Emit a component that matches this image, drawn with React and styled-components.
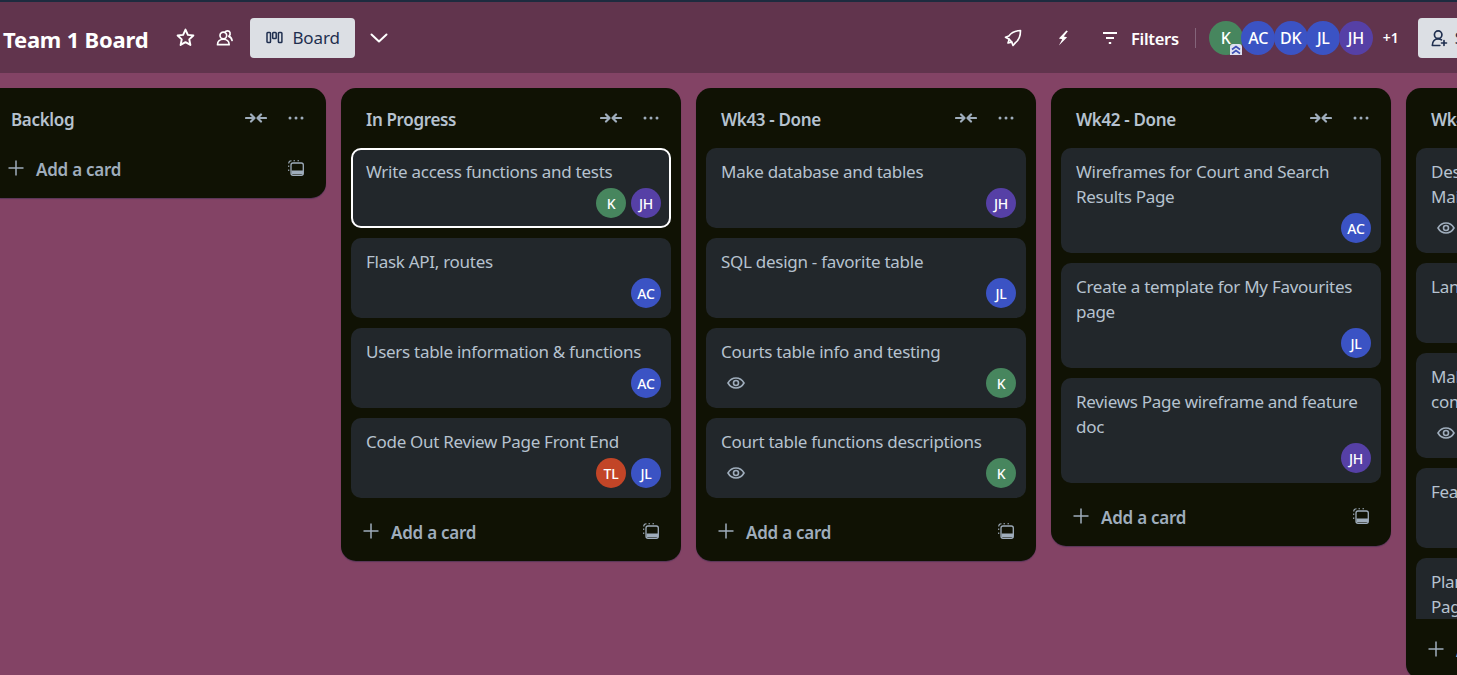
import styled, { createGlobalStyle } from "styled-components";

const GlobalStyle = createGlobalStyle`
  html, body {
    margin: 0;
    height: 100%;
    overflow: hidden;
    background-color: #834365;
    font-family: "Noto Sans", "Open Sans", sans-serif;
  }
`;

const Page = styled.div`
  width: 1457px;
  height: 675px;
  overflow: hidden;
  border-top: 2px solid #1d2b3f;
  box-sizing: border-box;
`;

// 상단 헤더, 공유 버튼이 화면 밖으로 잘림
const Header = styled.header`
  width: 1525px;
  height: 71px;
  box-sizing: border-box;
  padding: 0 10px 0 3px;
  background-color: #61344d;
  display: flex;
  align-items: center;
  justify-content: space-between;
  color: #fff;
`;

const HeaderGroup = styled.div`
  display: flex;
  align-items: center;
`;

const Title = styled.h1`
  margin: 0 17px 0 0;
  padding-top: 2px;
  font-size: 22px;
  font-weight: 700;
  letter-spacing: -0.2px;
  color: #fff;
  white-space: nowrap;
`;

const HeaderIcon = styled.span`
  display: flex;
  align-items: center;
  justify-content: center;
  width: ${(p) => p.$w || 40}px;
  color: #fff;
`;

const BoardButton = styled.div`
  display: flex;
  align-items: center;
  gap: 9px;
  height: 40px;
  padding: 0 15px 0 16px;
  margin-left: 5px;
  box-sizing: border-box;
  background-color: #dcdfe4;
  border-radius: 4px;
  color: #1f2f4f;
  font-size: 17px;
  letter-spacing: -0.1px;
`;

const FilterLabel = styled.span`
  padding-top: 2px;
  font-size: 16.5px;
  font-weight: 600;
  letter-spacing: -0.3px;
  margin-left: 4px;
`;

const Divider = styled.span`
  width: 1px;
  height: 20px;
  margin: 0 13px 0 16px;
  background-color: #84647a;
`;

const Members = styled.div`
  display: flex;
  align-items: center;
`;

const Avatar = styled.span`
  position: relative;
  flex: none;
  display: flex;
  align-items: center;
  justify-content: center;
  width: ${(p) => p.$size || 30}px;
  height: ${(p) => p.$size || 30}px;
  margin-left: ${(p) => p.$overlap || 0}px;
  border-radius: 50%;
  background-color: ${(p) => p.$color};
  color: #fff;
  font-size: ${(p) => (p.$size ? 16 : 14)}px;
  font-weight: 500;
  letter-spacing: -0.2px;
`;

const AdminBadge = styled.span`
  position: absolute;
  right: 1px;
  bottom: 0;
  width: 12px;
  height: 11px;
  display: flex;
  background-color: #dfe1f0;
  border-radius: 3px 3px 0 0;
  color: #3d4fb5;
`;

const MoreCount = styled.span`
  margin: 0 19px 0 10px;
  font-size: 14px;
  font-weight: 600;
`;

const ShareButton = styled(BoardButton)`
  margin-left: 0;
  padding: 0 15px 0 11px;
  gap: 6px;
`;

const Board = styled.main`
  display: flex;
  align-items: flex-start;
  gap: 15px;
  margin-left: -14px;
  padding-top: 15px;
`;

const Column = styled.section`
  flex: none;
  width: 340px;
  box-sizing: border-box;
  background-color: #101204;
  border-radius: 15px;
  box-shadow: 0 1px 1px rgba(9, 30, 66, 0.35);
`;

const ColumnHead = styled.div`
  height: 60px;
  box-sizing: border-box;
  padding: 0 22px 0 25px;
  display: flex;
  align-items: center;
  gap: 21px;
  color: #9fadbc;
`;

const ColumnTitle = styled.h2`
  flex: 1;
  margin: 0;
  padding-top: 2px;
  font-size: 17px;
  font-weight: 600;
  letter-spacing: -0.35px;
  color: #b6c2cf;
`;

const CardList = styled.div`
  display: flex;
  flex-direction: column;
  gap: 10px;
  padding: 0 10px;
  margin-bottom: ${(p) => (p.$height ? 10 : 13)}px;
  height: ${(p) => (p.$height ? `${p.$height}px` : "auto")};
  overflow: hidden;
`;

const Card = styled.article`
  flex: none;
  box-sizing: border-box;
  padding: 11px 10px 10px 15px;
  background-color: #22272b;
  border-radius: 10px;
  outline: ${(p) => (p.$active ? "2px solid #fff" : "none")};
  outline-offset: -2px;
`;

const CardTitle = styled.div`
  font-size: 17px;
  line-height: 25px;
  letter-spacing: -0.28px;
  color: #b6c2cf;
  white-space: pre-line;
`;

const CardFoot = styled.div`
  display: flex;
  align-items: center;
  justify-content: space-between;
  margin-top: 4px;
  min-height: 30px;
  color: #9fadbc;
`;

const Badges = styled.div`
  display: flex;
  padding-left: 5px;
`;

const CardMembers = styled.div`
  display: flex;
  gap: 5px;
`;

const ColumnFoot = styled.div`
  height: 50px;
  box-sizing: border-box;
  padding: 0 22px 10px 22px;
  display: flex;
  align-items: center;
  color: #9fadbc;
`;

const AddLabel = styled.span`
  flex: 1;
  margin-left: 12px;
  padding-top: 2px;
  font-size: 17px;
  font-weight: 600;
  letter-spacing: -0.25px;
`;

const Svg = ({ size = 20, children, ...rest }) => (
  <svg width={size} height={size} viewBox="0 0 24 24" fill="none" stroke="currentColor" strokeWidth="2" strokeLinecap="round" strokeLinejoin="round" {...rest}>
    {children}
  </svg>
);

const StarIcon = () => (
  <Svg size={21} strokeWidth="2.2">
    <path d="M12 3l2.700 6 6.300.7-4.700 4.400 1.300 6.400L12 17.300 6.400 20.500l1.300-6.400L3 9.700 9.300 9z" />
  </Svg>
);

const PeopleIcon = () => (
  <Svg size={20}>
    <circle cx="10" cy="9" r="4" />
    <path d="M3 20c0-4 3-6.500 7-6.500s7 2.500 7 6.500z" />
    <path d="M12 5c1-2 5-2.500 6 .5 .7 2-.3 3.500-1.500 4.500 2 .5 3.500 2.500 4 5" />
  </Svg>
);

const BoardIcon = () => (
  <svg width="17" height="14" viewBox="0 0 17 14" fill="none" stroke="currentColor" strokeWidth="1.500">
    <rect x="1" y="1.500" width="3.500" height="10" rx="0.800" />
    <rect x="6.700" y="1.500" width="3.500" height="6" rx="0.800" />
    <rect x="12.400" y="1.500" width="3.500" height="10" rx="0.800" />
  </svg>
);

const ChevronIcon = () => (
  <Svg size={24}>
    <path d="M4.500 8.500l7.500 7 7.500-7" />
  </Svg>
);

const RocketIcon = () => (
  <Svg size={20}>
    <path d="M21 3c-6 .3-11 2.500-14 6.500L3 11l4.500 2.500L10.500 17l1.500 4 3-3.500C19 14.500 21 9 21 3z" />
    <path d="M7.500 13.500L6 18l4.500-1" />
  </Svg>
);

const BoltIcon = () => (
  <svg width="18" height="18" viewBox="0 0 24 24" fill="currentColor">
    <path d="M16.500 2L6.500 12.500l4.500 1L6.500 22l11-11-4.500-1L18.500 3z" />
  </svg>
);

const FilterIcon = () => (
  <svg width="16" height="14" viewBox="0 0 16 14" stroke="currentColor" strokeWidth="1.800">
    <path d="M1 2h14M4 7h8M6.800 12h2.400" />
  </svg>
);

const ChevronsUp = () => (
  <svg width="12" height="11" viewBox="0 0 12 11" fill="none" stroke="currentColor" strokeWidth="1.600">
    <path d="M2 5.500L6 2.500l4 3M2 9.500L6 6.500l4 3" />
  </svg>
);

const AddMemberIcon = () => (
  <Svg size={20}>
    <circle cx="11" cy="8" r="4.500" />
    <path d="M4 21c0-5 3-8 7-8 1.500 0 3 .4 4 1.200M4 21h9M18 15v6M15 18h6" />
  </Svg>
);

const CollapseIcon = () => (
  <svg width="22" height="12" viewBox="0 0 22 12" fill="none" stroke="currentColor" strokeWidth="2.200" strokeLinecap="round" strokeLinejoin="round">
    <path d="M1 6h8M6 2.500L9.500 6 6 9.500M21 6h-8M16 2.500L12.500 6l3.500 3.500" />
  </svg>
);

const DotsIcon = () => (
  <svg width="16" height="4" viewBox="0 0 16 4" fill="currentColor">
    <circle cx="2" cy="2" r="1.500" />
    <circle cx="8" cy="2" r="1.500" />
    <circle cx="14" cy="2" r="1.500" />
  </svg>
);

const PlusIcon = () => (
  <svg width="16" height="16" viewBox="0 0 16 16" stroke="currentColor" strokeWidth="1.500">
    <path d="M8 .5v15M.5 8h15" />
  </svg>
);

const TemplateIcon = () => (
  <svg width="16" height="16" viewBox="0 0 16 16" fill="none" stroke="currentColor" strokeWidth="1.300">
    <path d="M.7 11V9.500M.7 7V5.500M.7 3.500C.7 1.800 1.800.7 3.500.7M5.500.7H7M9.500.7H11" strokeWidth="1.100" />
    <rect x="3" y="3" width="12.300" height="12.300" rx="2" />
    <rect x="3.500" y="10.500" width="11.500" height="3.800" fill="currentColor" stroke="none" />
  </svg>
);

const EyeIcon = () => (
  <svg width="20" height="20" viewBox="0 0 20 20" fill="none" stroke="currentColor" strokeWidth="1.600">
    <path d="M2 10c2-3.500 4.800-5 8-5s6 1.500 8 5c-2 3.500-4.800 5-8 5s-6-1.500-8-5z" />
    <circle cx="10" cy="10" r="2.500" />
  </svg>
);

const GREEN = "#47865e";
const BLUE = "#3b53c4";
const PURPLE = "#5640a6";
const RED = "#c24527";

const people = {
  K: GREEN,
  AC: BLUE,
  DK: BLUE,
  JL: BLUE,
  JH: PURPLE,
  TL: RED,
};

const columns = [
  { title: "Backlog", cards: [] },
  {
    title: "In Progress",
    cards: [
      { text: "Write access functions and tests", members: ["K", "JH"], active: true },
      { text: "Flask API, routes", members: ["AC"] },
      { text: "Users table information & functions", members: ["AC"] },
      { text: "Code Out Review Page Front End", members: ["TL", "JL"] },
    ],
  },
  {
    title: "Wk43 - Done",
    cards: [
      { text: "Make database and tables", members: ["JH"] },
      { text: "SQL design - favorite table", members: ["JL"] },
      { text: "Courts table info and testing", members: ["K"], watched: true },
      { text: "Court table functions descriptions", members: ["K"], watched: true },
    ],
  },
  {
    title: "Wk42 - Done",
    cards: [
      { text: "Wireframes for Court and Search\nResults Page", members: ["AC"] },
      { text: "Create a template for My Favourites\npage", members: ["JL"] },
      { text: "Reviews Page wireframe and feature\ndoc", members: ["JH"] },
    ],
  },
  {
    title: "Wk41 - Done",
    listHeight: 471,
    cards: [
      { text: "Design\nMain Page", members: ["K"], watched: true },
      { text: "Landing page", members: ["AC"] },
      { text: "Make\ncomponents", members: ["JL"], watched: true },
      { text: "Feature doc", members: ["JH"] },
      { text: "Plan\nPage", members: ["DK"] },
    ],
  },
];

function BoardColumn({ column }) {
  return (
    <Column>
      <ColumnHead>
        <ColumnTitle>{column.title}</ColumnTitle>
        <CollapseIcon />
        <DotsIcon />
      </ColumnHead>
      {column.cards.length > 0 && (
        <CardList $height={column.listHeight}>
          {column.cards.map((card) => (
            <Card key={card.text} $active={card.active}>
              <CardTitle>{card.text}</CardTitle>
              <CardFoot>
                <Badges>{card.watched && <EyeIcon />}</Badges>
                <CardMembers>
                  {card.members.map((m) => (
                    <Avatar key={m} $color={people[m]}>
                      {m}
                    </Avatar>
                  ))}
                </CardMembers>
              </CardFoot>
            </Card>
          ))}
        </CardList>
      )}
      <ColumnFoot>
        <PlusIcon />
        <AddLabel>Add a card</AddLabel>
        <TemplateIcon />
      </ColumnFoot>
    </Column>
  );
}

export default function App() {
  return (
    <Page>
      <GlobalStyle />
      <Header>
        <HeaderGroup>
          <Title>Team 1 Board</Title>
          <HeaderIcon><StarIcon /></HeaderIcon>
          <HeaderIcon><PeopleIcon /></HeaderIcon>
          <BoardButton>
            <BoardIcon />
            Board
          </BoardButton>
          <HeaderIcon $w={48}><ChevronIcon /></HeaderIcon>
        </HeaderGroup>
        <HeaderGroup>
          <HeaderIcon><RocketIcon /></HeaderIcon>
          <HeaderIcon $w={60}><BoltIcon /></HeaderIcon>
          <HeaderIcon $w={34}><FilterIcon /></HeaderIcon>
          <FilterLabel>Filters</FilterLabel>
          <Divider />
          <Members>
            <Avatar $size={34} $color={GREEN}>
              K
              <AdminBadge><ChevronsUp /></AdminBadge>
            </Avatar>
            <Avatar $size={34} $overlap={-1.5} $color={BLUE}>AC</Avatar>
            <Avatar $size={34} $overlap={-1.5} $color={BLUE}>DK</Avatar>
            <Avatar $size={34} $overlap={-1.5} $color={BLUE}>JL</Avatar>
            <Avatar $size={34} $overlap={-1.5} $color={PURPLE}>JH</Avatar>
          </Members>
          <MoreCount>+1</MoreCount>
          <ShareButton>
            <AddMemberIcon />
            Share
          </ShareButton>
        </HeaderGroup>
      </Header>
      <Board>
        {columns.map((column) => (
          <BoardColumn key={column.title} column={column} />
        ))}
      </Board>
    </Page>
  );
}
